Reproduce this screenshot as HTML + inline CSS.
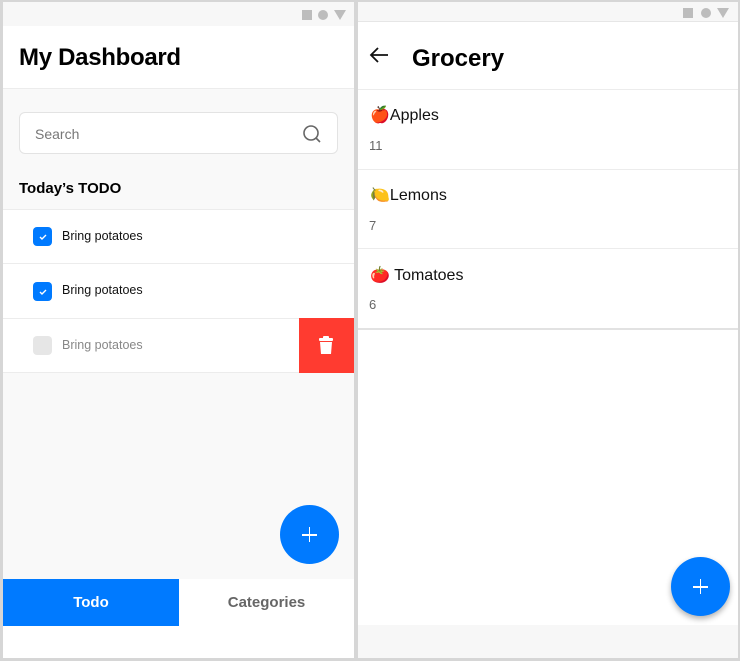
<!DOCTYPE html>
<html><head><style>
*{margin:0;padding:0;box-sizing:border-box}
body{width:740px;height:661px;background:#d6d6d6;position:relative;font-family:"Liberation Sans",sans-serif;overflow:hidden}
.a{position:absolute}
.sb{background:#f7f7f7}
</style></head><body>
<div class="a" style="left:3px;top:2px;width:351px;height:656px;background:#fff"></div>
<div class="a sb" style="left:3px;top:2px;width:351px;height:24px"></div>
<div class="a" style="left:302px;top:10px;width:10px;height:10px;background:#bdbdbd"></div>
<div class="a" style="left:318px;top:10px;width:10px;height:10px;background:#bdbdbd;border-radius:50%"></div>
<div class="a" style="left:334px;top:10px;width:0;height:0;border-left:6px solid transparent;border-right:6px solid transparent;border-top:10px solid #bdbdbd"></div>
<div class="a" style="left:19px;top:44px;font-size:24px;font-weight:bold;color:#000;letter-spacing:-0.3px">My Dashboard</div>
<div class="a" style="left:3px;top:88px;width:351px;height:121px;background:#f9f9f9;border-top:1px solid #ececec"></div>
<div class="a" style="left:19px;top:112px;width:319px;height:42px;background:#fff;border:1px solid #e3e3e3;border-radius:6px"></div>
<div class="a" style="left:35px;top:126px;font-size:14px;color:#777">Search</div>
<svg class="a" style="left:302px;top:124px" width="20" height="20" viewBox="0 0 20 20"><circle cx="9" cy="9" r="7" fill="none" stroke="#666" stroke-width="1.6"/><path d="M14 14l4 4" stroke="#666" stroke-width="1.6"/></svg>
<div class="a" style="left:19px;top:180px;font-size:15px;font-weight:bold;color:#000">Today’s TODO</div>
<div class="a" style="left:3px;top:209px;width:351px;height:1px;background:#ececec"></div>
<div class="a" style="left:3px;top:263px;width:351px;height:1px;background:#ececec"></div>
<div class="a" style="left:3px;top:318px;width:351px;height:1px;background:#ececec"></div>
<div class="a" style="left:3px;top:372px;width:351px;height:1px;background:#ececec"></div>
<div class="a" style="left:33px;top:227px;width:19px;height:19px;background:#007aff;border-radius:4px"></div>
<svg class="a" style="left:37px;top:231px" width="11" height="11"><path d="M3 6l2 2 4-4" stroke="#fff" stroke-width="1.4" fill="none"/></svg>
<div class="a" style="left:62px;top:229px;font-size:12.5px;color:#111">Bring potatoes</div>
<div class="a" style="left:33px;top:282px;width:19px;height:19px;background:#007aff;border-radius:4px"></div>
<svg class="a" style="left:37px;top:286px" width="11" height="11"><path d="M3 6l2 2 4-4" stroke="#fff" stroke-width="1.4" fill="none"/></svg>
<div class="a" style="left:62px;top:283px;font-size:12.5px;color:#111">Bring potatoes</div>
<div class="a" style="left:33px;top:336px;width:19px;height:19px;background:#e6e6e6;border-radius:4px"></div>
<div class="a" style="left:62px;top:338px;font-size:12.5px;color:#888">Bring potatoes</div>
<div class="a" style="left:299px;top:318px;width:55px;height:55px;background:#ff3b30"></div>
<svg class="a" style="left:317px;top:336px" width="18" height="20" viewBox="0 0 18 20"><rect x="2" y="2" width="14" height="3" rx="1" fill="#fff"/><rect x="6" y="0" width="6" height="3" rx="1" fill="#fff"/><path d="M3 6h12l-1 12H4z" fill="#fff"/></svg>
<div class="a" style="left:3px;top:373px;width:351px;height:206px;background:#f9f9f9"></div>
<div class="a" style="left:280px;top:505px;width:59px;height:59px;background:#007aff;border-radius:50%"></div>
<div class="a" style="left:302px;top:534px;width:15px;height:1.5px;background:#fff"></div>
<div class="a" style="left:308.8px;top:527px;width:1.5px;height:15px;background:#fff"></div>
<div class="a" style="left:3px;top:579px;width:176px;height:47px;background:#007aff;color:#fff;font-weight:bold;font-size:15px;text-align:center;line-height:47px">Todo</div>
<div class="a" style="left:179px;top:579px;width:175px;height:47px;color:#666;font-weight:bold;font-size:15px;text-align:center;line-height:47px">Categories</div>
<div class="a" style="left:358px;top:2px;width:380px;height:656px;background:#fff"></div>
<div class="a sb" style="left:358px;top:2px;width:380px;height:20px;border-bottom:1px solid #e6e6e6"></div>
<div class="a" style="left:683px;top:8px;width:10px;height:10px;background:#bdbdbd"></div>
<div class="a" style="left:701px;top:8px;width:10px;height:10px;background:#bdbdbd;border-radius:50%"></div>
<div class="a" style="left:717px;top:8px;width:0;height:0;border-left:6px solid transparent;border-right:6px solid transparent;border-top:10px solid #bdbdbd"></div>
<svg class="a" style="left:368px;top:45px" width="22" height="20" viewBox="0 0 22 20"><path d="M20 10H3M10 3l-7 7 7 7" stroke="#111" stroke-width="1.8" fill="none"/></svg>
<div class="a" style="left:412px;top:45px;font-size:24px;font-weight:bold;color:#000">Grocery</div>
<div class="a" style="left:358px;top:89px;width:380px;height:1px;background:#ececec"></div>
<div class="a" style="left:358px;top:169px;width:380px;height:1px;background:#ececec"></div>
<div class="a" style="left:358px;top:248px;width:380px;height:1px;background:#ececec"></div>
<div class="a" style="left:358px;top:328px;width:380px;height:2px;background:#e2e2e2"></div>
<div class="a" style="left:370px;top:105px;font-size:16px;color:#111">🍎Apples</div>
<div class="a" style="left:369px;top:138px;font-size:13px;color:#666">11</div>
<div class="a" style="left:370px;top:185px;font-size:16px;color:#111">🍋Lemons</div>
<div class="a" style="left:369px;top:218px;font-size:13px;color:#666">7</div>
<div class="a" style="left:370px;top:265px;font-size:16px;color:#111">🍅 Tomatoes</div>
<div class="a" style="left:369px;top:297px;font-size:13px;color:#666">6</div>
<div class="a" style="left:358px;top:625px;width:380px;height:33px;background:#f7f7f7"></div>
<div class="a" style="left:671px;top:557px;width:59px;height:59px;background:#007aff;border-radius:50%;box-shadow:0 3px 6px rgba(0,0,0,.3)"></div>
<div class="a" style="left:693px;top:586px;width:15px;height:1.5px;background:#fff"></div>
<div class="a" style="left:699.8px;top:579px;width:1.5px;height:15px;background:#fff"></div>
</body></html>
